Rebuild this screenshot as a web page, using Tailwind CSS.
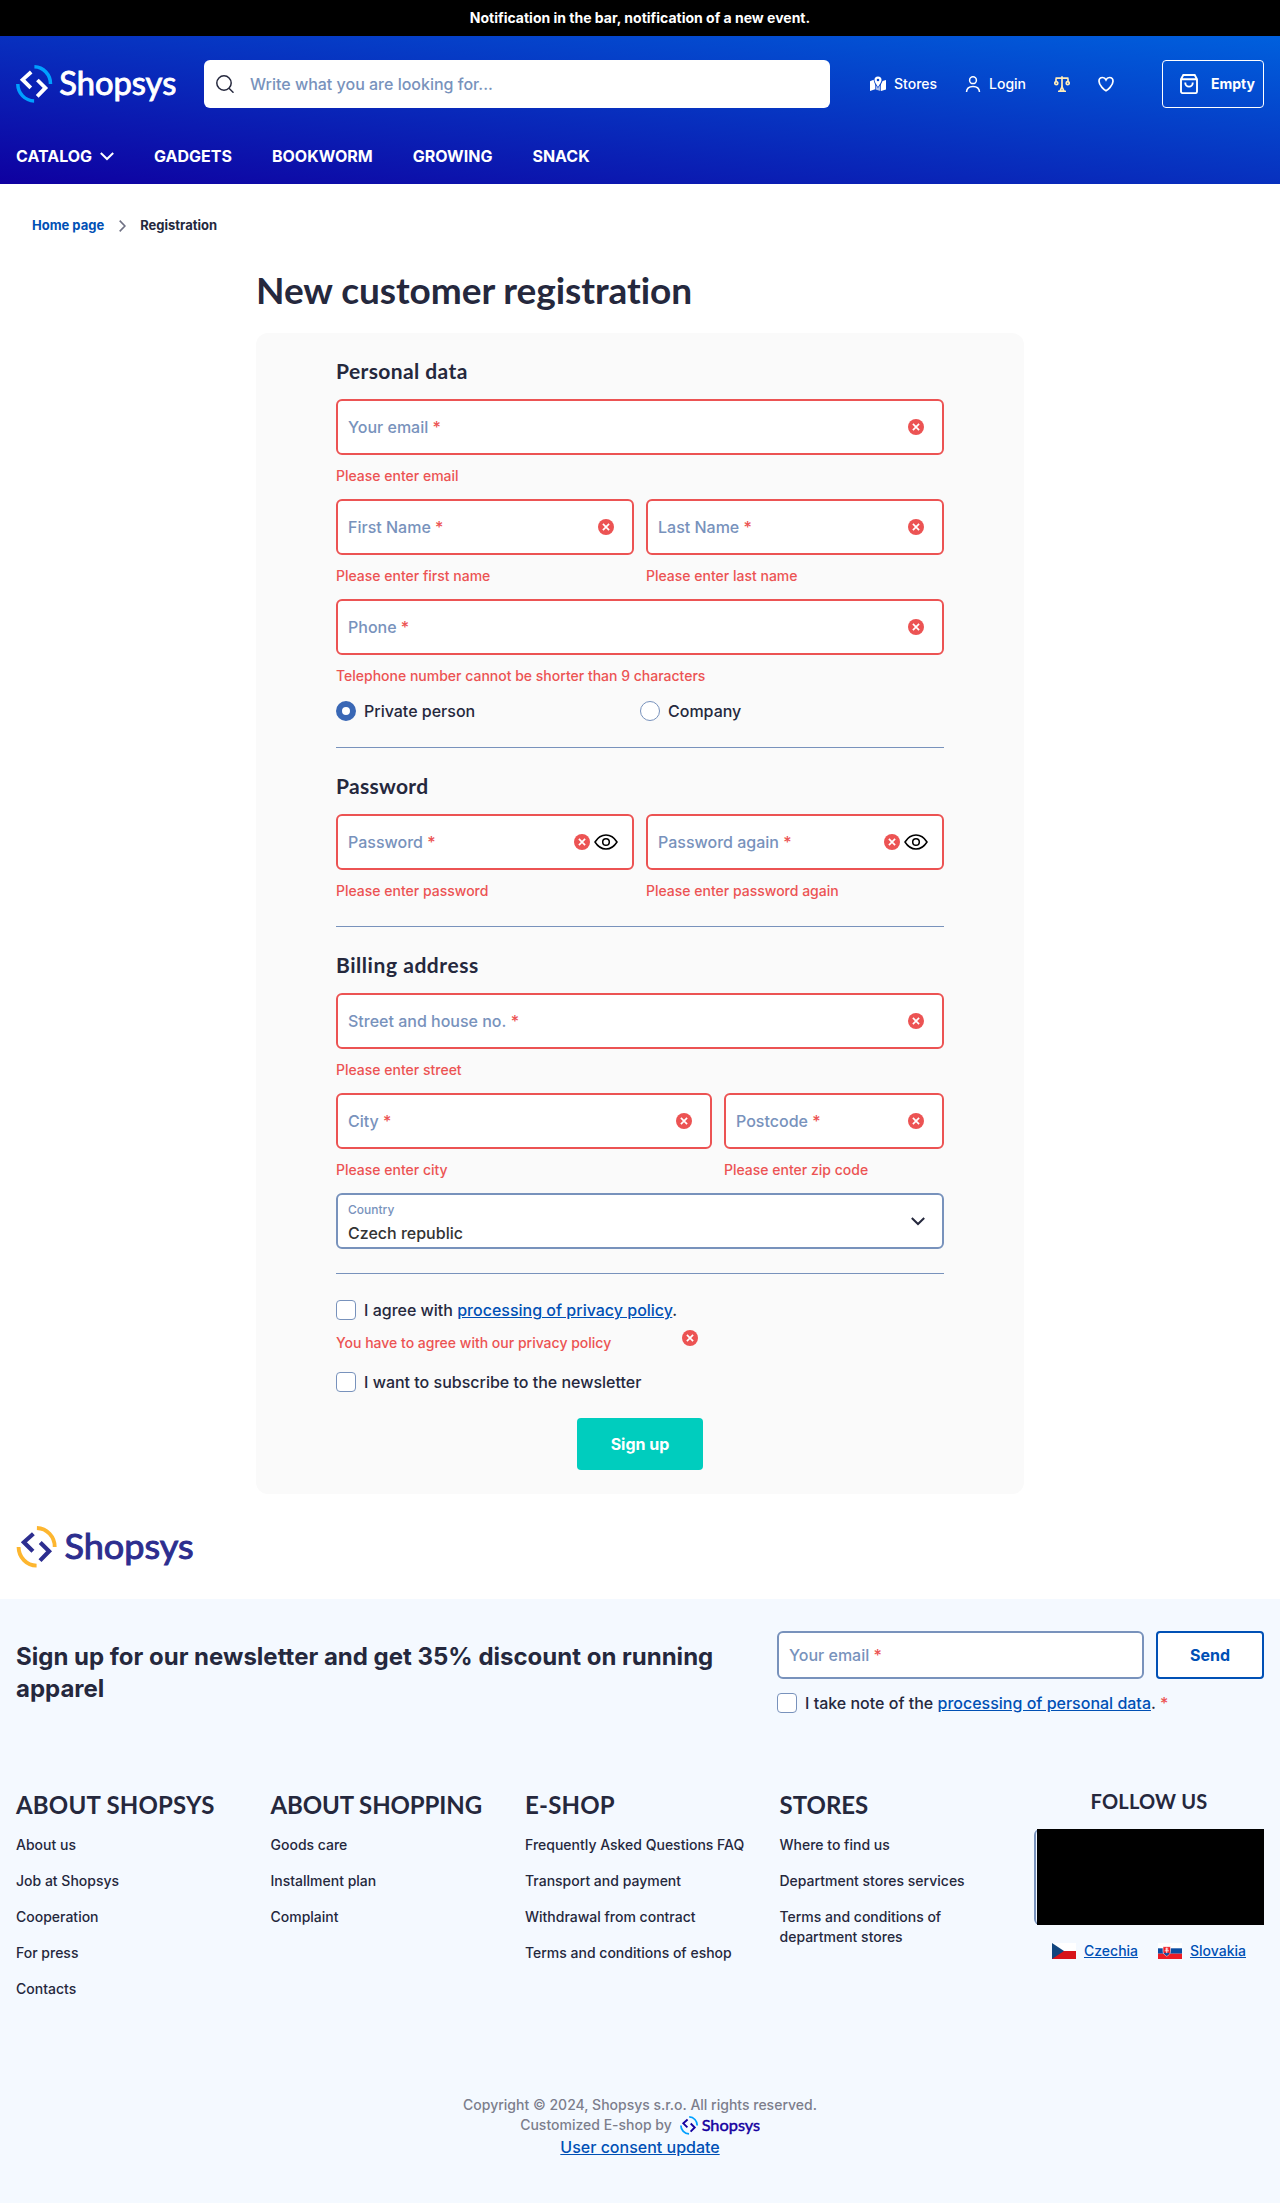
<!DOCTYPE html>
<html lang="en">
<head>
<meta charset="utf-8">
<title>New customer registration</title>
<script src="https://cdn.jsdelivr.net/npm/@tailwindcss/browser@4"></script>
</head>
<body class="w-[1280px] bg-white font-['Inter',sans-serif] text-base font-medium text-[#25283D]">
<svg class="hidden">
  <symbol id="err" viewBox="0 0 16 16"><circle cx="8" cy="8" r="8" fill="#EC5353"/><path d="M4.9 4.900l6.200 6.200M11.100 4.900l-6.200 6.200" stroke="#fff" stroke-width="1.700"/></symbol>
  <symbol id="eye" viewBox="0 0 24 16"><path d="M1 8C4 3.200 7.800 1 12 1s8 2.200 11 7c-3 4.800-6.800 7-11 7S4 12.800 1 8z" fill="none" stroke="#000" stroke-width="1.500"/><circle cx="12" cy="8" r="3.300" fill="none" stroke="#000" stroke-width="1.500"/></symbol>
  <symbol id="logo" viewBox="0 0 160 38">
    <g fill="none" stroke-width="3.500">
      <path d="M18.400 1.800A16.500 17 0 0 1 34.500 19M1.800 19A16.500 17 0 0 0 18.100 35.900" stroke="var(--ring)"/>
      <path d="M15.200 7L6.600 14.700L14.800 22.800M21.400 15L29.400 22.900L21.200 31.300" stroke="currentColor" stroke-width="3.800"/>
    </g>
    <text x="43.300" y="30" font-family="Lato, sans-serif" font-size="32" font-weight="400" stroke="currentColor" stroke-width="0.900" textLength="117" lengthAdjust="spacingAndGlyphs" fill="currentColor">Shopsys</text>
  </symbol>
</svg>

<div class="flex h-9 items-center justify-center bg-black text-sm font-bold text-white">Notification in the bar, notification of a new event.</div>

<header class="flex h-[148px] flex-col bg-[linear-gradient(to_top_right,#0F00A0,#0060DD)] px-4 pt-6 text-white">
  <div class="flex h-12 items-center">
    <svg class="h-[38px] w-40 text-white [--ring:#00A0FF]"><use href="#logo"/></svg>
    <div class="ml-7 flex h-12 w-[626px] items-center rounded-md bg-white pl-3 text-[#7892BC]">
      <svg class="mr-4 size-[18px]" viewBox="0 0 18 18" fill="none" stroke="#25283D" stroke-width="1.500"><circle cx="8" cy="8" r="7.200"/><path d="M13 13.200l4.500 4.500"/></svg>
      Write what you are looking for...
    </div>
    <div class="ml-10 flex items-center text-sm">
      <svg class="mr-2 h-4 w-4" viewBox="0 0 16 16" fill="#fff"><path d="M0 5.200L3.600 3.800c.3 1.900 1 3.400 1.500 4.500V13.300L0 15z"/><path d="M16 4v9.500L11 15V8.300c.7-1.200 1.300-2.600 1.500-3.300z"/><path d="M5.600 9l2.400 3 2.400-3v6l-4.800-1.500z" opacity=".65"/><path fill-rule="evenodd" d="M8 .5a3.500 3.500 0 0 1 3.500 3.600C11.500 6.500 8 11 8 11S4.500 6.500 4.500 4.100A3.500 3.500 0 0 1 8 .5zm0 2.200a1.300 1.300 0 1 0 0 2.600 1.300 1.300 0 0 0 0-2.600z"/></svg>
      Stores
      <svg class="ml-7 mr-2 h-4 w-4" viewBox="0 0 16 16" fill="none" stroke="#fff" stroke-width="1.500"><circle cx="8" cy="4.200" r="3.400"/><path d="M1.500 16c.2-3.500 2.600-5.500 6.500-5.500s6.300 2 6.500 5.500"/></svg>
      Login
      <svg class="ml-7 h-4 w-4" viewBox="0 0 16 16" fill="none" stroke="#FFECB8" stroke-width="1.700"><path d="M8 .3v11M1.500 2.200h13M2 2.500v3.500M14 2.500v3.500"/><circle cx="2.300" cy="7.200" r="1.500"/><circle cx="13.700" cy="7.200" r="1.500"/><path d="M8 10.800l-2 4.400h4z"/><path d="M4 15.400h8"/></svg>
      <svg class="ml-7 h-4 w-4" viewBox="0 0 16 16" fill="none" stroke="#fff" stroke-width="1.700"><path d="M8 14.800C6.500 14 1 9.500 1 5.200 1 2.800 2.700 1.500 4.500 1.500 6 1.500 7.300 2.300 8 3.800c.7-1.500 2-2.300 3.500-2.300 1.800 0 3.500 1.300 3.500 3.700C15 9.500 9.500 14 8 14.800z"/></svg>
    </div>
    <div class="ml-auto flex h-12 w-[102px] items-center rounded border border-white pl-[17px] text-sm font-bold">
      <svg class="mr-[13px] h-5 w-[18px]" viewBox="0 0 18 20" fill="none" stroke="#fff" stroke-width="1.900"><path d="M1 5.200L3.300 1h11.400L17 5.200V17.500a1.600 1.600 0 0 1-1.600 1.600H2.600A1.600 1.600 0 0 1 1 17.500zM1 5.200h16"/><path d="M5.300 8.500v.4a3.700 3.700 0 0 0 7.400 0v-.4"/></svg>
      Empty
    </div>
  </div>
  <nav class="mt-9 flex h-6 items-center gap-10 font-bold">
    <span class="flex items-center gap-2">CATALOG <svg class="h-4 w-[14px]" viewBox="0 0 14 16" fill="none" stroke="#fff" stroke-width="2"><path d="M.8 5l6.200 6 6.200-6"/></svg></span>
    <span>GADGETS</span><span>BOOKWORM</span><span>GROWING</span><span>SNACK</span>
  </nav>
</header>

<div class="flex h-[82px] items-center px-8 pt-0.5 text-[13px] font-bold">
  <a class="text-[#0050B5]">Home page</a>
  <svg class="ml-[15px] mr-[14px] h-3 w-[7px]" viewBox="0 0 7 12" fill="none" stroke="#6F7184" stroke-width="1.600"><path d="M.7.6L5.900 6 .7 11.400"/></svg>
  <span>Registration</span>
</div>

<main class="mx-auto w-[768px]">
  <h1 class="flex h-[67px] items-start font-['Lato',sans-serif] text-[37px] font-bold leading-[47px] tracking-[-0.05px]">New customer registration</h1>
  <form class="h-[1161px] rounded-xl bg-[#FAFAFA] px-20 pt-6">
    <section class="h-[391px] border-b border-[#7892BC]">
      <h2 class="h-[42px] font-['Lato',sans-serif] text-[21px] font-bold leading-[28px] tracking-[0.4px]">Personal data</h2>
      <div class="h-[100px]">
        <div class="flex h-14 items-center rounded-md border-2 border-[#EC5353] bg-white pl-2.5 pr-[18px] text-[#7892BC]">Your email&nbsp;<span class="text-[#EC5353]">*</span><svg class="ml-auto size-4"><use href="#err"/></svg></div>
        <p class="mt-[11px] text-sm text-[#EC5353]">Please enter email</p>
      </div>
      <div class="grid h-[100px] grid-cols-2 gap-3">
        <div>
          <div class="flex h-14 items-center rounded-md border-2 border-[#EC5353] bg-white pl-2.5 pr-[18px] text-[#7892BC]">First Name&nbsp;<span class="text-[#EC5353]">*</span><svg class="ml-auto size-4"><use href="#err"/></svg></div>
          <p class="mt-[11px] text-sm text-[#EC5353]">Please enter first name</p>
        </div>
        <div>
          <div class="flex h-14 items-center rounded-md border-2 border-[#EC5353] bg-white pl-2.5 pr-[18px] text-[#7892BC]">Last Name&nbsp;<span class="text-[#EC5353]">*</span><svg class="ml-auto size-4"><use href="#err"/></svg></div>
          <p class="mt-[11px] text-sm text-[#EC5353]">Please enter last name</p>
        </div>
      </div>
      <div class="h-[102px]">
        <div class="flex h-14 items-center rounded-md border-2 border-[#EC5353] bg-white pl-2.5 pr-[18px] text-[#7892BC]">Phone&nbsp;<span class="text-[#EC5353]">*</span><svg class="ml-auto size-4"><use href="#err"/></svg></div>
        <p class="mt-[11px] text-sm text-[#EC5353]">Telephone number cannot be shorter than 9 characters</p>
      </div>
      <div class="grid h-5 grid-cols-2 leading-5">
        <label class="flex h-5 items-center gap-2"><span class="size-5 rounded-full border-[6px] border-[#3967B5] bg-white"></span>Private person</label>
        <label class="flex h-5 items-center gap-2"><span class="size-5 rounded-full border border-[#7892BC] bg-white"></span>Company</label>
      </div>
    </section>
    <section class="h-[179px] border-b border-[#7892BC] pt-6">
      <h2 class="h-[42px] font-['Lato',sans-serif] text-[21px] font-bold leading-[28px] tracking-[0.3px]">Password</h2>
      <div class="grid grid-cols-2 gap-3">
        <div>
          <div class="flex h-14 items-center rounded-md border-2 border-[#EC5353] bg-white pl-2.5 pr-3.5 text-[#7892BC]">Password&nbsp;<span class="text-[#EC5353]">*</span><svg class="ml-auto size-4"><use href="#err"/></svg><svg class="ml-1 h-4 w-6"><use href="#eye"/></svg></div>
          <p class="mt-[11px] text-sm text-[#EC5353]">Please enter password</p>
        </div>
        <div>
          <div class="flex h-14 items-center rounded-md border-2 border-[#EC5353] bg-white pl-2.5 pr-3.5 text-[#7892BC]">Password again&nbsp;<span class="text-[#EC5353]">*</span><svg class="ml-auto size-4"><use href="#err"/></svg><svg class="ml-1 h-4 w-6"><use href="#eye"/></svg></div>
          <p class="mt-[11px] text-sm text-[#EC5353]">Please enter password again</p>
        </div>
      </div>
    </section>
    <section class="h-[347px] border-b border-[#7892BC] pt-6">
      <h2 class="h-[42px] font-['Lato',sans-serif] text-[21px] font-bold leading-[28px] tracking-[0.55px]">Billing address</h2>
      <div class="h-[100px]">
        <div class="flex h-14 items-center rounded-md border-2 border-[#EC5353] bg-white pl-2.5 pr-[18px] text-[#7892BC]">Street and house no.&nbsp;<span class="text-[#EC5353]">*</span><svg class="ml-auto size-4"><use href="#err"/></svg></div>
        <p class="mt-[11px] text-sm text-[#EC5353]">Please enter street</p>
      </div>
      <div class="grid h-[100px] grid-cols-[376px_220px] gap-3">
        <div>
          <div class="flex h-14 items-center rounded-md border-2 border-[#EC5353] bg-white pl-2.5 pr-[18px] text-[#7892BC]">City&nbsp;<span class="text-[#EC5353]">*</span><svg class="ml-auto size-4"><use href="#err"/></svg></div>
          <p class="mt-[11px] text-sm text-[#EC5353]">Please enter city</p>
        </div>
        <div>
          <div class="flex h-14 items-center rounded-md border-2 border-[#EC5353] bg-white pl-2.5 pr-[18px] text-[#7892BC]">Postcode&nbsp;<span class="text-[#EC5353]">*</span><svg class="ml-auto size-4"><use href="#err"/></svg></div>
          <p class="mt-[11px] text-sm text-[#EC5353]">Please enter zip code</p>
        </div>
      </div>
      <div class="flex h-14 items-center justify-between rounded-md border-2 border-[#7892BC] bg-white pl-2.5 pr-[17px]">
        <div class="pt-1"><p class="text-xs leading-4 text-[#7892BC]">Country</p><p class="pt-[3px] text-[#333]">Czech republic</p></div>
        <svg class="h-4 w-[14px]" viewBox="0 0 14 16" fill="none" stroke="#25283D" stroke-width="2"><path d="M.8 5l6.200 6 6.200-6"/></svg>
      </div>
    </section>
    <div class="flex gap-2 pt-[26px] leading-5"><span class="size-5 rounded border border-[#7892BC] bg-white"></span><span>I agree with <a class="text-[#0050B5] underline">processing of privacy policy</a>.</span></div>
    <div class="flex h-[52px] w-[362px] justify-between pt-2.5 text-sm text-[#EC5353]"><span class="pt-[3px]">You have to agree with our privacy policy</span><svg class="size-4"><use href="#err"/></svg></div>
    <div class="flex gap-2 leading-5"><span class="size-5 rounded border border-[#7892BC] bg-white"></span>I want to subscribe to the newsletter</div>
    <button type="button" class="mx-auto mt-[26px] block h-[52px] w-[126px] rounded bg-[#00CDBE] font-bold text-white">Sign up</button>
  </form>
</main>

<div class="h-[105px] px-4 pt-8"><svg class="h-[42px] w-[178px] text-[#2D2E8F] [--ring:#FDB62F]"><use href="#logo"/></svg></div>

<footer class="h-[604px] bg-[#F4F9FF] px-4 pt-8">
  <div class="flex h-[154px] justify-between">
    <h2 class="w-[740px] pt-2.5 text-2xl font-bold leading-8">Sign up for our newsletter and get 35% discount on running apparel</h2>
    <div class="w-[487px]">
      <div class="flex gap-3">
        <div class="flex h-12 w-[367px] items-center rounded-md border-2 border-[#7892BC] bg-white pl-2.5 text-[#7892BC]">Your email&nbsp;<span class="text-[#EC5353]">*</span></div>
        <button type="button" class="h-12 w-[108px] rounded border-2 border-[#0050B5] bg-white font-bold text-[#0050B5]">Send</button>
      </div>
      <div class="mt-3.5 flex gap-2 leading-5"><span class="size-5 rounded border border-[#7892BC] bg-white"></span><span>I take note of the <a class="text-[#0050B5] underline">processing of personal data</a>. <span class="text-[#EC5353]">*</span></span></div>
    </div>
  </div>
  <div class="grid h-[310px] grid-cols-[254.5px_254.500px_254.500px_254.500px_230px] text-sm">
    <div class="flex flex-col gap-4"><h3 class="-mb-1 h-9 whitespace-nowrap font-['Lato',sans-serif] text-2xl font-bold leading-[39px] tracking-[0.2px]">ABOUT SHOPSYS</h3><a class="mt-[2px]">About us</a><a>Job at Shopsys</a><a>Cooperation</a><a>For press</a><a>Contacts</a></div>
    <div class="flex flex-col gap-4"><h3 class="-mb-1 h-9 whitespace-nowrap font-['Lato',sans-serif] text-2xl font-bold leading-[39px] tracking-[-0.1px]">ABOUT SHOPPING</h3><a class="mt-[2px]">Goods care</a><a>Installment plan</a><a>Complaint</a></div>
    <div class="flex flex-col gap-4"><h3 class="-mb-1 h-9 whitespace-nowrap font-['Lato',sans-serif] text-2xl font-bold leading-[39px] tracking-[0.2px]">E-SHOP</h3><a class="mt-[2px]">Frequently Asked Questions FAQ</a><a>Transport and payment</a><a>Withdrawal from contract</a><a>Terms and conditions of eshop</a></div>
    <div class="flex flex-col gap-4 pr-12"><h3 class="-mb-1 h-9 whitespace-nowrap font-['Lato',sans-serif] text-2xl font-bold leading-[39px]">STORES</h3><a class="mt-[2px]">Where to find us</a><a>Department stores services</a><a>Terms and conditions of department stores</a></div>
    <div>
      <h3 class="h-11 text-center font-['Lato',sans-serif] text-xl font-bold leading-[32px] tracking-[0.2px]">FOLLOW US</h3>
      <div class="h-24 rounded-l-md border-l-2 border-[#7892BC] pl-px"><div class="h-full bg-black"></div></div>
      <div class="mt-4 flex items-center justify-center gap-5 text-[#0050B5] underline">
        <span class="flex items-center gap-2"><svg class="h-4 w-6" viewBox="0 0 24 16"><path fill="#fff" d="M0 0h24v8H0z"/><path fill="#D7141A" d="M0 8h24v8H0z"/><path fill="#11457E" d="M0 0l12 8-12 8z"/></svg>Czechia</span>
        <span class="flex items-center gap-2"><svg class="h-4 w-6" viewBox="0 0 24 16"><path fill="#fff" d="M0 0h24v5.300H0z"/><path fill="#0B4EA2" d="M0 5.300h24v5.400H0z"/><path fill="#EE1C25" d="M0 10.700h24V16H0z"/><path d="M5 3.700h7.500v4.600c0 2.500-1.800 3.800-3.750 4.900C6.800 12.100 5 10.800 5 8.300z" fill="#EE1C25" stroke="#fff" stroke-width=".6"/><path d="M5.800 10.600c1-1 2-1.200 2.950-.6.950-.6 2-.4 2.950.6-.8 1.100-1.800 1.700-2.950 2.300-1.150-.6-2.150-1.200-2.950-2.300z" fill="#0B4EA2"/><path d="M8.750 4.600v5.600M7.200 6h3.100M6.700 7.800h4.100" stroke="#fff" stroke-width=".9"/></svg>Slovakia</span>
      </div>
    </div>
  </div>
  <div class="flex flex-col items-center text-sm text-[#7C7E8C]">
    <p>Copyright © 2024, Shopsys s.r.o. All rights reserved.</p>
    <p class="flex h-5 items-center gap-2">Customized E-shop by <svg class="h-[19px] w-20 text-[#1400A0] [--ring:#00A0FF]"><use href="#logo"/></svg></p>
    <a class="text-base text-[#0050B5] underline">User consent update</a>
  </div>
</footer>
</body>
</html>
